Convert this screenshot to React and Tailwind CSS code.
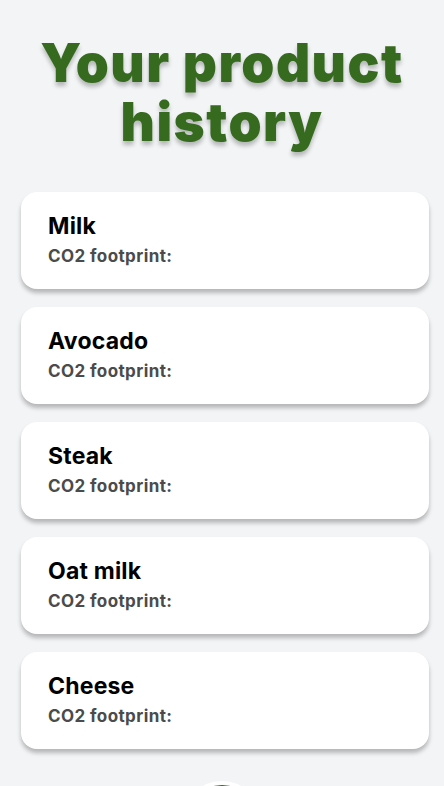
const products = ['Milk', 'Avocado', 'Steak', 'Oat milk', 'Cheese'];

function ProductCard({ name }) {
  return (
    <div className="rounded-2xl bg-white px-[27px] pb-[19px] pt-[18px] shadow-[0_4px_4px_rgba(0,0,0,0.25)]">
      <p className="text-[23px] font-bold leading-[32px] tracking-[0.2px] text-black">{name}</p>
      <p className="text-[17px] font-bold leading-[28px] tracking-[0.4px] text-[#4b4b4b]">CO2 footprint:</p>
    </div>
  );
}

export default function App() {
  return (
    <div
      className="min-h-screen bg-gray-100 pt-[34px]"
      style={{ fontFamily: 'Inter, "Noto Sans", sans-serif' }}
    >
      <h1 className="px-4 text-center text-[53px] font-black leading-[59px] tracking-[1.5px] text-[#366b1f] [text-shadow:0_4px_4px_rgba(0,0,0,0.25)]">
        Your product history
      </h1>
      <div className="mt-[40px] flex flex-col gap-[18px] pl-[21px] pr-[15px]">
        {products.map((p) => (
          <ProductCard key={p} name={p} />
        ))}
      </div>
      <div className="mt-[32px] flex justify-center pb-4">
        <button
          type="button"
          className="h-20 w-20 rounded-full border-4 border-white bg-[#366b1f]"
          aria-label="Scan"
        />
      </div>
    </div>
  );
}
